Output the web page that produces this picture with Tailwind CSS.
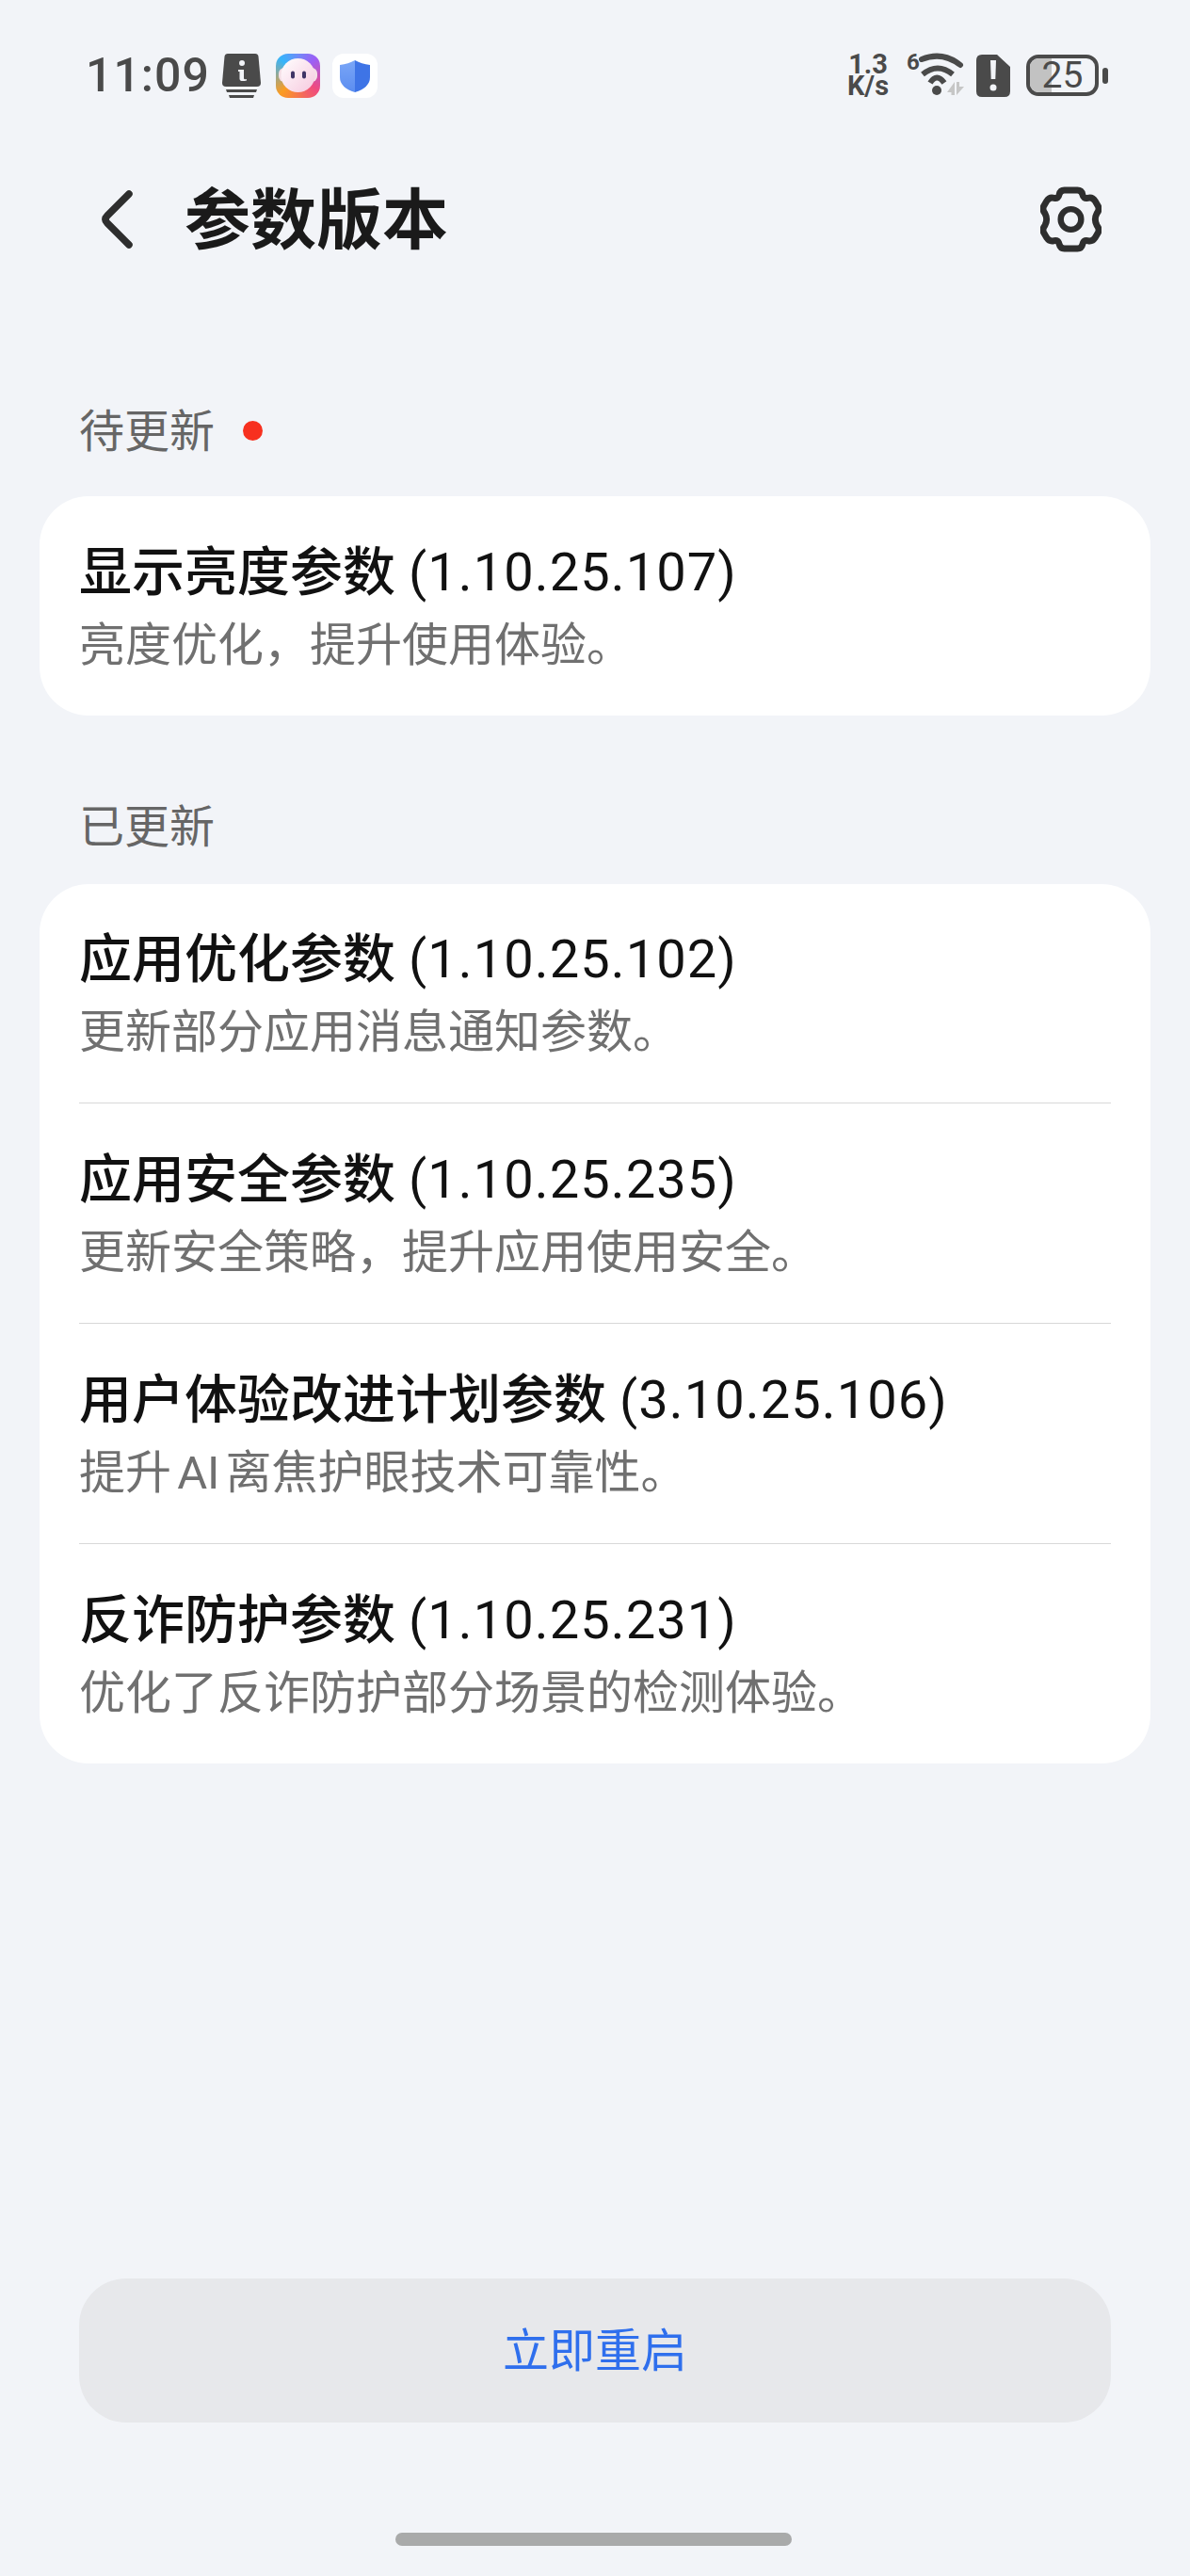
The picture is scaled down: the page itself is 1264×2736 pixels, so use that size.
<!DOCTYPE html>
<html lang="zh"><head><meta charset="utf-8">
<script src="https://cdn.jsdelivr.net/npm/@tailwindcss/browser@4"></script>
</head>
<body class="m-0 bg-[#f2f4f8] font-['Roboto','Noto_Sans_CJK_SC',sans-serif]">
<div class="w-[1264px] h-[2736px] flex flex-col overflow-hidden">
  <!-- status bar -->
  <div class="h-[158px] shrink-0 flex items-center justify-between pl-[91px] pr-[87px] pt-[2px] text-[#4a4a4a]">
    <div class="flex items-center">
      <span class="text-[50px] leading-none tracking-[1px] font-medium w-[145px] font-['Roboto']">11:09</span>
      <svg width="41" height="47" viewBox="0 0 41 47"><path d="M6 0H35Q38 0 38.5 3L41 31Q41 35 37 35H4Q0 35 0 31L2.500 3Q3 0 6 0Z" fill="#4a4a4a"/><circle cx="21" cy="10" r="3" fill="#f2f4f8"/><path d="M17 17H23V26Q23 28 26 27V28.500Q18 30.500 18.500 26V19H17Z" fill="#f2f4f8"/><path d="M4 38H37L36 41H5ZM7 44H34L33 47H8Z" fill="#4a4a4a"/></svg>
      <div class="ml-[16px] w-[47px] h-[47px] rounded-[13px] overflow-hidden bg-[conic-gradient(#6f8bf8_0deg,#9b5ff5_45deg,#ef4a80_125deg,#fb9c22_225deg,#36b4fb_315deg,#6f8bf8_360deg)]">
        <svg class="block" width="47" height="47" viewBox="0 0 47 47"><defs><linearGradient id="f" x1="0" y1="0" x2="1" y2="1"><stop offset="0" stop-color="#ffffff"/><stop offset="1" stop-color="#f6c9de"/></linearGradient></defs><rect x="3" y="15" width="41" height="15" rx="6" fill="#f4dfe6"/><circle cx="23.500" cy="23" r="18" fill="url(#f)"/><rect x="16" y="18.500" width="4" height="8" rx="2" fill="#3f3566"/><rect x="28" y="18.500" width="4" height="8" rx="2" fill="#3f3566"/></svg>
      </div>
      <svg class="ml-[13px]" width="48" height="47" viewBox="0 0 48 47"><defs><linearGradient id="s" x1="0" y1="0" x2="0" y2="1"><stop offset="0" stop-color="#7aa6f7"/><stop offset="1" stop-color="#5b8df0"/></linearGradient></defs><rect width="48" height="47" rx="12" fill="#fff"/><path d="M24 7Q31 11 40 12V25Q40 36 24 41Z" fill="#3e74e6"/><path d="M24 7Q17 11 8 12V25Q8 36 24 41Z" fill="url(#s)"/></svg>
    </div>
    <div class="flex items-center">
      <div class="w-[46px] text-center text-[29px] leading-[23px] font-bold font-['Roboto'] text-[#4a4a4a]">1.3<br>K/s</div>
      <svg class="ml-[18px] overflow-visible" width="62" height="46" viewBox="0 0 62 46"><text x="0" y="17" font-family="Roboto" font-size="24" font-weight="700" fill="#4a4a4a">6</text><g fill="none" stroke="#4a4a4a" stroke-width="6"><path d="M16 6Q38 -3 57 12" stroke-linecap="round"/><path d="M17 22Q33 9 49 22"/><path d="M25 31Q32 20 40 31"/></g><circle cx="32" cy="39" r="5" fill="#4a4a4a"/><path d="M43 41L51 30V44H47.500V41ZM53 44V30H56V35H61Z" fill="#c6c6c6"/></svg>
      <svg class="ml-[12px]" width="36" height="45" viewBox="0 0 36 45"><path d="M6 0H22L36 13V39Q36 45 30 45H6Q0 45 0 39V6Q0 0 6 0Z" fill="#4a4a4a"/><path d="M15 6H21L20.300 26H15.700Z" fill="#f2f4f8"/><circle cx="18" cy="35" r="3.500" fill="#f2f4f8"/></svg>
      <div class="ml-[17px] flex items-center">
        <div class="relative w-[77px] h-[44px] rounded-[13px] border-[4px] border-[#4a4a4a] overflow-hidden flex items-center justify-center">
          <div class="absolute left-0 top-0 bottom-0 w-[23px] bg-[#c2c2c2]"></div>
          <span class="relative text-[39px] leading-none font-['Roboto'] text-[#4a4a4a]">25</span>
        </div>
        <div class="ml-[4px] w-[6px] h-[17px] rounded-[3px] bg-[#4a4a4a]"></div>
      </div>
    </div>
  </div>
  <!-- title bar -->
  <div class="mt-[29px] h-[92px] shrink-0 flex items-center justify-between pl-[108px] pr-[94px]">
    <div class="flex items-center">
      <svg width="33" height="62" viewBox="0 0 33 62" fill="none"><path d="M29 4L6 27Q2 31 6 35L29 58" stroke="#2e2e2e" stroke-width="7.500" stroke-linecap="round" stroke-linejoin="round"/></svg>
      <h1 class="ml-[55px] pt-[3px] text-[70px] leading-none font-bold text-[#1a1a1a]">参数版本</h1>
    </div>
    <svg width="65" height="70" viewBox="0 0 66 70" fill="none"><path d="M26 3.500H40Q44.500 3.500 45.500 8Q46.500 13 51 12Q56 10.500 59 15L62.500 21Q64 25 61 28.500Q57.500 35 61 41.500Q64 45 62.500 49L59 55Q56 59.500 51 58Q46.500 57 45.500 62Q44.500 66.500 40 66.500H26Q21.500 66.500 20.500 62Q19.500 57 15 58Q10 59.500 7 55L3.500 49Q2 45 5 41.500Q8.500 35 5 28.500Q2 25 3.500 21L7 15Q10 10.500 15 12Q19.500 13 20.500 8Q21.500 3.500 26 3.500Z" stroke="#2e2e2e" stroke-width="7"/><circle cx="33" cy="35" r="11" stroke="#2e2e2e" stroke-width="6.500"/></svg>
  </div>
  <!-- section: pending -->
  <div class="mt-[148px] pl-[85px] h-[60px] flex items-center text-[#666] text-[48px]">
    <span class="leading-none pt-[3px] -ml-[1px]">待更新</span>
    <span class="ml-[30px] w-[21px] h-[21px] rounded-full bg-[#f7301f]"></span>
  </div>
  <div class="mt-[40px] mx-[42px] bg-white rounded-[52px] pl-[42px] pr-[44px] pt-[6px] h-[233px] flex flex-col justify-center">
    <div class="text-[56px] leading-[78px] font-medium text-[#111]">显示亮度参数 <span class="font-normal tracking-[1.1px]">(1.10.25.107)</span></div>
    <div class="text-[49px] leading-[78px] text-[#707070]">亮度优化，提升使用体验。</div>
  </div>
  <!-- section: updated -->
  <div class="mt-[88px] pl-[85px] h-[60px] flex items-center text-[#666] text-[48px]">
    <span class="leading-none pt-[2px] -ml-[1px]">已更新</span>
  </div>
  <div class="mt-[31px] mx-[42px] bg-white rounded-[52px] px-[42px]">
    <div class="h-[233px] pt-[6px] flex flex-col justify-center border-b border-[#d8d8d8]">
      <div class="text-[56px] leading-[78px] font-medium text-[#111]">应用优化参数 <span class="font-normal tracking-[1.1px]">(1.10.25.102)</span></div>
      <div class="text-[49px] leading-[78px] text-[#707070]">更新部分应用消息通知参数。</div>
    </div>
    <div class="h-[234px] pt-[6px] flex flex-col justify-center border-b border-[#d8d8d8]">
      <div class="text-[56px] leading-[78px] font-medium text-[#111]">应用安全参数 <span class="font-normal tracking-[1.1px]">(1.10.25.235)</span></div>
      <div class="text-[49px] leading-[78px] text-[#707070]">更新安全策略，提升应用使用安全。</div>
    </div>
    <div class="h-[234px] pt-[6px] flex flex-col justify-center border-b border-[#d8d8d8]">
      <div class="text-[56px] leading-[78px] font-medium text-[#111]">用户体验改进计划参数 <span class="font-normal tracking-[1.1px]">(3.10.25.106)</span></div>
      <div class="text-[49px] leading-[78px] text-[#707070] [word-spacing:-6px]">提升 AI 离焦护眼技术可靠性。</div>
    </div>
    <div class="h-[233px] pt-[6px] flex flex-col justify-center">
      <div class="text-[56px] leading-[78px] font-medium text-[#111]">反诈防护参数 <span class="font-normal tracking-[1.1px]">(1.10.25.231)</span></div>
      <div class="text-[49px] leading-[78px] text-[#707070]">优化了反诈防护部分场景的检测体验。</div>
    </div>
  </div>
  <!-- bottom -->
  <div class="mt-auto mx-[84px] h-[153px] rounded-[50px] bg-[#e7e8eb] pt-[2px] flex items-center justify-center text-[#2f6fed] text-[49px]">立即重启</div>
  <div class="mt-[117px] mb-[32px] ml-[420px] w-[421px] h-[14px] rounded-[7px] bg-[#a9aaaa]"></div>
</div>
</body></html>
